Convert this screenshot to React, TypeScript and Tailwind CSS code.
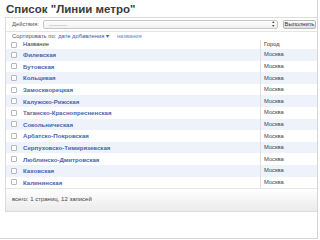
import React from "react";

const lines = [
  "Филевская",
  "Бутовская",
  "Кольцевая",
  "Замоскворецкая",
  "Калужско-Рижская",
  "Таганско-Краснопресненская",
  "Сокольническая",
  "Арбатско-Покровская",
  "Серпуховско-Тимирязевская",
  "Люблинско-Дмитровская",
  "Каховская",
  "Калининская",
];

function Box() {
  return (
    <span className="block h-[6px] w-[6px] rounded-[1px] border border-[#b8b8b8] bg-white" />
  );
}

export default function App() {
  return (
    <div className="h-[240px] w-[320px] overflow-hidden bg-white font-['Liberation_Sans',Arial,sans-serif]">
      <div className="h-[239px] w-[318px] border-r border-b border-[#d6d6d6]">
        <h1 className="h-[17px] pl-[6px] pt-[2px] text-[11.5px] font-bold leading-[14px] text-[#3a3a3a]">
          Список "Линии метро"
        </h1>
        <div className="ml-[5px] border border-r-0 border-[#dcdcdc] bg-white">
          <div className="flex h-[14px] items-center border-b border-[#e4e4e4] pl-[6px] pr-[1px]">
            <span className="w-[31px] text-[5.8px] text-[#555]">Действия:</span>
            <div className="flex h-[9px] flex-1 items-center justify-between rounded-[2px] border border-[#c8c8c8] bg-gradient-to-b from-white to-[#f0f0f0] pl-[5px] pr-[2px]">
              <span className="text-[6px] leading-none text-[#999]">---------</span>
              <span className="flex flex-col text-[3.5px] leading-[3.5px] text-[#333]">
                <span>▲</span>
                <span>▼</span>
              </span>
            </div>
            <button className="ml-[5px] h-[9px] w-[33px] rounded-[2px] border border-[#b9b9b9] bg-gradient-to-b from-white to-[#dcdcdc] text-[5.8px] leading-none text-[#333]">
              Выполнить
            </button>
          </div>
          <div className="flex h-[8px] items-center gap-[2px] pl-[6px] pt-[1px] text-[5.8px] leading-none text-[#555]">
            <span>Сортировать по:</span>
            <span className="text-[#3a56a0]">дате добавления ▾</span>
            <span className="ml-[6px] text-[#6c86c8]">названия</span>
          </div>
          <div className="flex h-[9px] items-center text-[5.8px] text-[#333]">
            <div className="flex w-[16px] justify-center">
              <Box />
            </div>
            <div className="flex-1 pl-[1px]">Название</div>
            <div className="flex h-full w-[57px] items-center border-l border-[#e0e0e0] pl-[3px]">
              Город
            </div>
          </div>
          {lines.map((name, i) => (
            <div
              key={name}
              className={`flex h-[11.6px] items-center text-[6.1px] ${
                i % 2 === 0 ? "bg-[#edf2fb]" : "bg-white"
              }`}
            >
              <div className="flex w-[16px] justify-center">
                <Box />
              </div>
              <div className="flex-1 pl-[1px] font-bold text-[#4665ad]">{name}</div>
              <div className="flex h-full w-[57px] items-center border-l border-[#e0e0e0] pl-[3px] text-[5.8px] text-[#444]">
                Москва
              </div>
            </div>
          ))}
          <div className="h-[23px] border-t border-[#e6e6e6] bg-gradient-to-b from-white to-[#ebebeb] pl-[6px] pt-[7px] text-[6px] leading-none text-[#444]">
            всего: 1 страниц, 12 записей
          </div>
        </div>
      </div>
    </div>
  );
}
